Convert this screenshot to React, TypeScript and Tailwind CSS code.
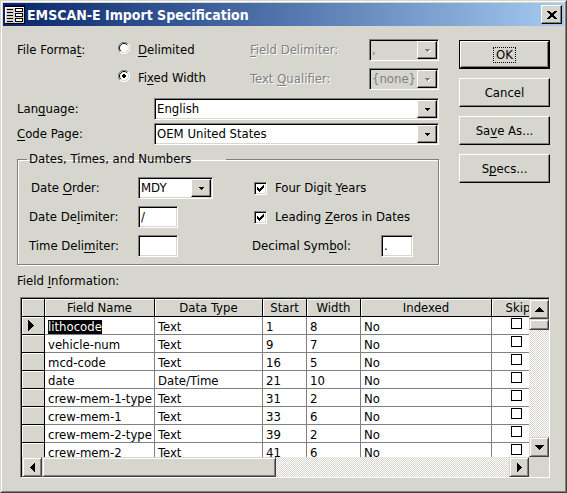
import { useId, useState, type ReactNode } from "react";

const raised =
  "border border-t-white border-l-white border-r-black border-b-black shadow-[inset_-1px_-1px_0_#808080]";
const sunken =
  "border border-t-[#808080] border-l-[#808080] border-r-white border-b-white shadow-[inset_1px_1px_0_#000,inset_-1px_-1px_0_#d6d6ce]";
const dither =
  "bg-[repeating-conic-gradient(#ffffff_0_25%,#d6d6ce_0_50%)] bg-[length:2px_2px]";

function U({ children }: { children: ReactNode }) {
  return (
    <span className="underline underline-offset-2 [text-decoration-skip-ink:none]">
      {children}
    </span>
  );
}

function Arrow({ dir, className }: { dir: "up" | "down" | "left" | "right"; className: string }) {
  const shape = {
    up: "M0 5h9v-1h-1v-1h-1v-1h-1v-1h-1v-1h-1v1h-1v1h-1v1h-1v1h-1z",
    down: "M0 0h9v1h-1v1h-1v1h-1v1h-1v1h-1v-1h-1v-1h-1v-1h-1v-1h-1z",
    left: "M5 0v9h-1v-1h-1v-1h-1v-1h-1v-1h-1v-1h1v-1h1v-1h1v-1h1v-1z",
    right: "M0 0v9h1v-1h1v-1h1v-1h1v-1h1v-1h-1v-1h-1v-1h-1v-1h-1v-1z",
  }[dir];
  const box = dir === "up" || dir === "down" ? "0 0 9 5" : "0 0 5 9";
  return (
    <svg viewBox={box} className={className} fill="currentColor" shapeRendering="crispEdges" aria-hidden="true">
      <path d={shape} />
    </svg>
  );
}

function Combo({ id, value, disabled, className }: { id: string; value: string; disabled?: boolean; className: string }) {
  return (
    <div className={`relative flex h-[22px] ${sunken} ${disabled ? "" : "bg-white"} ${className}`}>
      <select
        id={id}
        disabled={disabled}
        defaultValue={value}
        className="w-full appearance-none bg-transparent pl-[2px] leading-4 opacity-100 outline-none disabled:text-[#808080]"
      >
        <option>{value}</option>
      </select>
      <span
        className={`pointer-events-none absolute inset-y-px right-px grid w-5 place-items-center bg-[#d6d6ce] ${raised} ${
          disabled ? "text-[#808080]" : "text-black"
        }`}
      >
        <svg
          viewBox="0 0 5 3"
          className={`h-[3px] w-[5px] ${disabled ? "drop-shadow-[1px_1px_0_#fff]" : ""}`}
          fill="currentColor"
          shapeRendering="crispEdges"
          aria-hidden="true"
        >
          <path d="M0 0h5v1h-1v1h-1v1h-1v-1h-1v-1h-1z" />
        </svg>
      </span>
    </div>
  );
}

function TextBox({ id, value, className }: { id: string; value: string; className: string }) {
  return (
    <input
      id={id}
      type="text"
      defaultValue={value}
      className={`h-[22px] bg-white pb-[2px] pl-[2px] outline-none ${sunken} ${className}`}
    />
  );
}

function Radio({ id, checked, onChange }: { id: string; checked: boolean; onChange: () => void }) {
  return (
    <span className="grid size-3 shrink-0">
      <input
        id={id}
        type="radio"
        name="file-format"
        checked={checked}
        onChange={onChange}
        className="size-3 appearance-none [grid-area:1/1]"
      />
      <svg viewBox="0 0 12 12" className="pointer-events-none size-3 [grid-area:1/1]" fill="none" aria-hidden="true">
        <circle cx="6" cy="6" r="5" fill="#fff" />
        <path d="M1.9 10.1A5.5 5.5 0 0 1 10.1 1.9" stroke="#808080" />
        <path d="M10.1 1.9A5.5 5.5 0 0 1 1.9 10.1" stroke="#fff" />
        <path d="M2.8 9.2A4.5 4.5 0 0 1 9.2 2.8" stroke="#000" />
        <path d="M9.2 2.8A4.5 4.5 0 0 1 2.8 9.2" stroke="#d6d6ce" />
        {checked && <path d="M5 4h2v1h1v2h-1v1h-2v-1h-1v-2h1z" fill="#000" shapeRendering="crispEdges" />}
      </svg>
    </span>
  );
}

function Check({ children }: { children: ReactNode }) {
  const id = useId();
  return (
    <div className="flex h-[22px] items-center gap-2 pl-[2px]">
      <span className="grid size-[13px] shrink-0">
        <input
          id={id}
          type="checkbox"
          defaultChecked
          className={`peer size-[13px] appearance-none bg-white [grid-area:1/1] ${sunken}`}
        />
        <svg
          viewBox="0 0 13 13"
          className="pointer-events-none invisible size-[13px] [grid-area:1/1] peer-checked:visible"
          shapeRendering="crispEdges"
          aria-hidden="true"
        >
          <path d="M3 5h1v1h1v1h1v-1h1v-1h1v-1h1v-1h1v3h-1v1h-1v1h-1v1h-1v1h-1v-1h-1v-1h-1z" />
        </svg>
      </span>
      <label htmlFor={id}>{children}</label>
    </div>
  );
}

function PushButton({ children, isDefault }: { children: ReactNode; isDefault?: boolean }) {
  return isDefault ? (
    <button type="button" className="h-[29px] w-full border border-black bg-[#d6d6ce]">
      <span className={`grid h-full w-full place-items-center ${raised}`}>
        <span className="border border-dotted border-black px-[2px] leading-[14px]">{children}</span>
      </span>
    </button>
  ) : (
    <button type="button" className={`h-[29px] w-full bg-[#d6d6ce] ${raised}`}>
      {children}
    </button>
  );
}

function ScrollButton({ dir, className }: { dir: "up" | "down" | "left" | "right"; className: string }) {
  return (
    <button
      type="button"
      aria-label={`Scroll ${dir}`}
      className={`grid shrink-0 place-items-center bg-[#d6d6ce] ${thumb} ${className}`}
    >
      <Arrow dir={dir} className={dir === "up" || dir === "down" ? "h-[5px] w-[9px]" : "h-[9px] w-[5px]"} />
    </button>
  );
}

const thumb =
  "border border-t-[#d6d6ce] border-l-[#d6d6ce] border-r-[#404040] border-b-[#404040] shadow-[inset_1px_1px_0_#fff,inset_-1px_-1px_0_#808080]";

const fields = [
  ["lithocode", "Text", "1", "8"],
  ["vehicle-num", "Text", "9", "7"],
  ["mcd-code", "Text", "16", "5"],
  ["date", "Date/Time", "21", "10"],
  ["crew-mem-1-type", "Text", "31", "2"],
  ["crew-mem-1", "Text", "33", "6"],
  ["crew-mem-2-type", "Text", "39", "2"],
  ["crew-mem-2", "Text", "41", "6"],
];

const headCell =
  "h-[18px] border-r border-b border-black bg-[#d6d6ce] p-0 text-center font-normal leading-[17px] shadow-[inset_1px_1px_0_#fff]";
const cell =
  "h-[18px] overflow-hidden whitespace-nowrap border-r border-b border-[#808080] p-0 pt-[3px] pl-[3px] align-top leading-[14px]";

function FieldTable() {
  return (
    <table aria-label="Field Information" className="w-[543px] table-fixed border-separate border-spacing-0 bg-white">
      <colgroup>
        <col className="w-[23px]" />
        <col className="w-[110px]" />
        <col className="w-[108px]" />
        <col className="w-11" />
        <col className="w-[54px]" />
        <col className="w-[131px]" />
        <col className="w-[73px]" />
      </colgroup>
      <thead>
        <tr>
          <td className={headCell} />
          <th className={headCell}>Field Name</th>
          <th className={headCell}>Data Type</th>
          <th className={headCell}>Start</th>
          <th className={headCell}>Width</th>
          <th className={headCell}>Indexed</th>
          <th className={`${headCell} pr-5`}>Skip</th>
        </tr>
      </thead>
      <tbody>
        {fields.map(([name, type, start, width], i) => (
          <tr key={name}>
            <td className={headCell}>
              {i === 0 && (
                <svg viewBox="0 0 6 11" className="ml-[6px] block h-[11px] w-[6px]" shapeRendering="crispEdges" aria-hidden="true">
                  <path d="M0 0v11h1v-1h1v-1h1v-1h1v-1h1v-1h1v-1h-1v-1h-1v-1h-1v-1h-1v-1h-1v-1z" />
                </svg>
              )}
            </td>
            <td className={cell}>
              {i === 0 ? <span className="block w-fit bg-black text-white">{name}</span> : name}
            </td>
            <td className={cell}>{type}</td>
            <td className={cell}>{start}</td>
            <td className={cell}>{width}</td>
            <td className={cell}>No</td>
            <td className="h-[18px] border-r border-b border-[#808080] p-0 pt-px pl-[19px] align-top">
              <input
                type="checkbox"
                aria-label={`Skip ${name}`}
                className="block size-[11px] appearance-none border border-black bg-white checked:bg-black"
              />
            </td>
          </tr>
        ))}
      </tbody>
    </table>
  );
}

export default function App() {
  const [format, setFormat] = useState("fixed");
  const faded = "text-[#808080] [text-shadow:1px_1px_0_#fff]";
  return (
    <main className="border border-[#d6d6ce] border-r-[#404040] border-b-[#404040] bg-[#d6d6ce] font-['DejaVu_Sans_Condensed','DejaVu_Sans',sans-serif] text-[13px] leading-4 text-black">
      <div className="border border-white border-r-[#808080] border-b-[#808080] p-px">
        <header className="flex h-[23px] items-center gap-[2px] bg-linear-to-r from-[#0a246a] to-[#a6caf0] pr-[2px] pl-[2px]">
          <svg viewBox="0 0 20 19" className="h-[19px] w-5" shapeRendering="crispEdges" aria-hidden="true">
            <path d="M0 0h20v19h-20z" fill="#000" />
            <path d="M0 0h19v1h-19z" fill="#000080" />
            <path d="M0 2h19v16h-19z" fill="#d6d6ce" />
            <path d="M0 2h19v1h-19zM0 2h1v16h-1z" fill="#fff" />
            <path d="M2 4h6v1h-6zM2 7h6v1h-6zM2 10h6v1h-6zM2 13h6v1h-6zM2 16h6v1h-6z" fill="#000" />
            <path d="M10 3h8v4h-8zM10 8h8v4h-8zM10 13h8v4h-8z" fill="#000" />
            <path d="M11 4h6v2h-6zM11 9h6v2h-6zM11 14h6v2h-6z" fill="#fff" />
          </svg>
          <h1 className="flex-1 text-[14px] font-semibold text-white">EMSCAN-E Import Specification</h1>
          <button type="button" aria-label="Close" className={`grid h-[19px] w-[21px] place-items-center bg-[#d6d6ce] ${raised}`}>
            <svg viewBox="0 0 10 8" className="h-2 w-[10px]" shapeRendering="crispEdges" aria-hidden="true">
              <path d="M0 0h3v1h1v1h2v-1h1v-1h3v1h-1v1h-1v1h-1v2h1v1h1v1h1v1h-3v-1h-1v-1h-2v1h-1v1h-3v-1h1v-1h1v-1h1v-2h-1v-1h-1v-1h-1z" />
            </svg>
          </button>
        </header>

        <form className="px-[14px] pt-[13px] pb-3" onSubmit={(e) => e.preventDefault()}>
          <div className="flex gap-5">
            <div className="min-w-0 flex-1">
              <div role="radiogroup" aria-label="File Format" className="flex">
                <div className="w-[101px] pt-[3px]">
                  File Forma<U>t</U>:
                </div>
                <div className="flex w-[132px] flex-col gap-3 pt-[3px]">
                  <div className="flex gap-2">
                    <Radio id="fmt-delimited" checked={format === "delimited"} onChange={() => setFormat("delimited")} />
                    <label htmlFor="fmt-delimited">
                      <U>D</U>elimited
                    </label>
                  </div>
                  <div className="flex gap-2">
                    <Radio id="fmt-fixed" checked={format === "fixed"} onChange={() => setFormat("fixed")} />
                    <label htmlFor="fmt-fixed">
                      Fi<U>x</U>ed Width
                    </label>
                  </div>
                </div>
                <div className="flex flex-1 flex-col gap-[7px]">
                  <div className="flex items-center justify-between">
                    <label htmlFor="field-delim" className={faded}>
                      <U>F</U>ield Delimiter:
                    </label>
                    <Combo id="field-delim" value="," disabled className="w-[70px]" />
                  </div>
                  <div className="flex items-center justify-between">
                    <label htmlFor="text-qual" className={faded}>
                      Text <U>Q</U>ualifier:
                    </label>
                    <Combo id="text-qual" value="{none}" disabled className="w-[70px]" />
                  </div>
                </div>
              </div>

              <div className="mt-2 flex flex-col gap-[3px]">
                <div className="flex items-center">
                  <label htmlFor="language" className="w-[137px]">
                    Lan<U>g</U>uage:
                  </label>
                  <Combo id="language" value="English" className="flex-1" />
                </div>
                <div className="flex items-center">
                  <label htmlFor="codepage" className="w-[137px]">
                    <U>C</U>ode Page:
                  </label>
                  <Combo id="codepage" value="OEM United States" className="flex-1" />
                </div>
              </div>

              <fieldset className="mt-[6px] border border-[#808080] px-[11px] pb-[7px] shadow-[1px_1px_0_#fff,inset_1px_1px_0_#fff]">
                <legend className="-ml-[2px] w-[199px] px-[2px]">Dates, Times, and Numbers</legend>
                <div className="flex pt-[10px]">
                  <div className="flex flex-1 flex-col gap-[7px]">
                    <div className="flex items-center">
                      <label htmlFor="date-order" className="w-[109px] pl-[2px]">
                        Date <U>O</U>rder:
                      </label>
                      <Combo id="date-order" value="MDY" className="w-[75px]" />
                    </div>
                    <div className="flex items-center">
                      <label htmlFor="date-delim" className="w-[109px]">
                        Date De<U>l</U>imiter:
                      </label>
                      <TextBox id="date-delim" value="/" className="w-10" />
                    </div>
                    <div className="flex items-center">
                      <label htmlFor="time-delim" className="w-[109px]">
                        Time Deli<U>m</U>iter:
                      </label>
                      <TextBox id="time-delim" value="" className="w-10" />
                    </div>
                  </div>
                  <div className="flex w-[175px] flex-col gap-[7px]">
                    <Check>
                      Four Digit <U>Y</U>ears
                    </Check>
                    <Check>
                      Leading <U>Z</U>eros in Dates
                    </Check>
                    <div className="flex items-center">
                      <label htmlFor="decimal" className="w-[129px]">
                        Decimal Sym<U>b</U>ol:
                      </label>
                      <TextBox id="decimal" value="." className="w-8" />
                    </div>
                  </div>
                </div>
              </fieldset>
            </div>

            <div className="flex w-[91px] flex-col gap-[9px] pt-px">
              <PushButton isDefault>OK</PushButton>
              <PushButton>Cancel</PushButton>
              <PushButton>
                Sa<U>v</U>e As...
              </PushButton>
              <PushButton>
                S<U>p</U>ecs...
              </PushButton>
            </div>
          </div>

          <div className="mt-2">
            Field <U>I</U>nformation:
          </div>
          <div className="mt-2 ml-[3px] border border-[#808080] border-r-white border-b-white">
            <div className="flex border-t border-l border-black">
              <div className="h-[158px] min-w-0 flex-1 overflow-hidden">
                <FieldTable />
              </div>
              <div className={`flex w-5 flex-col ${dither}`}>
                <ScrollButton dir="up" className="h-5 w-5" />
                <div className={`h-[11px] bg-[#d6d6ce] ${thumb}`} />
                <div className="flex-1" />
                <ScrollButton dir="down" className="h-5 w-5" />
              </div>
            </div>
            <div className="flex border-l border-black">
              <div className={`flex h-5 flex-1 ${dither}`}>
                <ScrollButton dir="left" className="h-5 w-5" />
                <div className={`w-[234px] bg-[#d6d6ce] ${thumb}`} />
                <div className="flex-1" />
                <ScrollButton dir="right" className="h-5 w-5" />
              </div>
              <div className="w-5" />
            </div>
          </div>
        </form>
      </div>
    </main>
  );
}
